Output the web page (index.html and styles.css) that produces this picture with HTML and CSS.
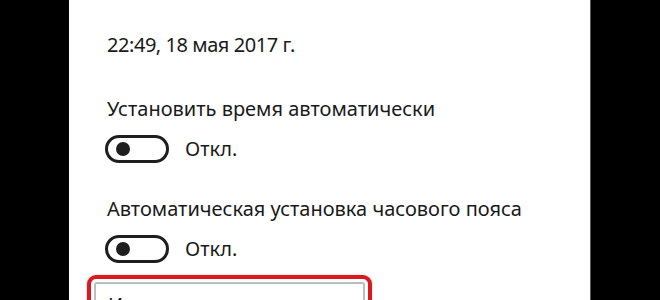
FILE: index.html
```html
<!DOCTYPE html>
<html lang="ru">
<head>
<meta charset="utf-8">
<link rel="stylesheet" href="styles.css">
</head>
<body>
<div class="screen">
  <div class="bar-left"></div>
  <div class="panel">
    <div class="date">22:49, 18 мая 2017 г.</div>
    <div class="setting">
      <div class="label">Установить время автоматически</div>
      <div class="toggle-row">
        <span class="toggle"><span class="knob"></span></span>
        <span class="state">Откл.</span>
      </div>
    </div>
    <div class="setting">
      <div class="label">Автоматическая установка часового пояса</div>
      <div class="toggle-row">
        <span class="toggle"><span class="knob"></span></span>
        <span class="state">Откл.</span>
      </div>
    </div>
    <div class="highlight">
      <div class="button">Изменить</div>
    </div>
  </div>
  <div class="edge"></div>
  <div class="bar-right"></div>
</div>
</body>
</html>
```
FILE: styles.css
```css
html, body {
  margin: 0;
  padding: 0;
  background: #000;
}
.screen {
  display: flex;
  width: 660px;
  height: 300px;
  overflow: hidden;
}
.bar-left {
  width: 69px;
  flex: none;
  background: #000;
}
.panel {
  width: 521px;
  flex: none;
  background: #fff;
  padding: 0 0 0 38px;
  box-sizing: border-box;
  font-family: "Noto Sans", "Open Sans", sans-serif;
  color: #1a1a1a;
  font-size: 20px;
  line-height: 28px;
}
.edge {
  width: 1px;
  flex: none;
  background: #5a5a5a;
}
.bar-right {
  flex: 1;
  background: #000;
}
.date {
  margin-top: 31px;
  letter-spacing: -0.45px;
}
.setting {
  margin-top: 32px;
}
.date + .setting {
  margin-top: 36px;
}
.toggle-row {
  display: flex;
  align-items: center;
  gap: 16px;
  margin-top: 12px;
  margin-left: -2px;
}
.toggle {
  width: 64px;
  height: 28px;
  box-sizing: border-box;
  border: 3px solid #1e1e1e;
  border-radius: 14px;
  display: flex;
  align-items: center;
  padding-left: 8px;
}
.knob {
  width: 14px;
  height: 14px;
  border-radius: 50%;
  background: #1e1e1e;
}
.highlight {
  margin-top: 12px;
  margin-left: -20px;
  width: 285px;
  height: 60px;
  box-sizing: border-box;
  border: 4px solid #dc1820;
  border-radius: 9px;
  padding: 3px;
  box-shadow: 0 0 2px rgba(90, 110, 90, 0.45);
}
.button {
  height: 100%;
  box-sizing: border-box;
  border: 2px solid #b8c0bb;
  border-radius: 3px;
  padding: 7px 0 0 12px;
}
```
